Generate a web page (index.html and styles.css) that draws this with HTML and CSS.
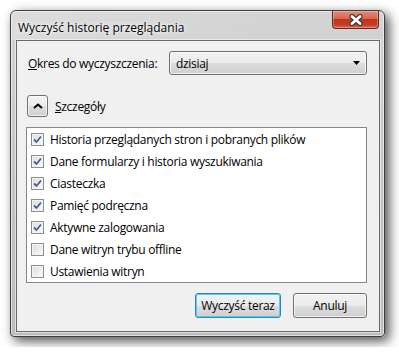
FILE: index.html
```
<!DOCTYPE html>
<html lang="pl">
<head>
    <meta charset="UTF-8">
    <title>Wyczyść historię przeglądania</title>
    <link rel="stylesheet" href="styles.css">
</head>
<body>
    <div class="window">
        <div class="titlebar">
            <span class="title">Wyczyść historię przeglądania</span>
            <div class="close-btn">
                <svg width="18" height="12" viewBox="0 0 18 12">
                    <path d="M5 2.5 L13 9.5 M13 2.5 L5 9.5" stroke="#3a3a3a" stroke-width="5" stroke-linecap="round"/>
                    <path d="M5 2.5 L13 9.5 M13 2.5 L5 9.5" stroke="#ffffff" stroke-width="2.8" stroke-linecap="round"/>
                </svg>
            </div>
        </div>

        <div class="client">
            <div class="period-row">
                <span class="label"><u>O</u>kres do wyczyszczenia:</span>
                <div class="select">
                    <span>dzisiaj</span>
                    <svg width="8" height="5" viewBox="0 0 8 5"><path d="M0 0 H7 L3.5 4 Z" fill="#000"/></svg>
                </div>
            </div>

            <div class="details-row">
                <div class="expander">
                    <svg width="10" height="6" viewBox="0 0 10 6"><path d="M1 5 L5 1.5 L9 5" fill="none" stroke="#000" stroke-width="2"/></svg>
                </div>
                <span><u>S</u>zczegóły</span>
            </div>

            <ul class="items">
                <li><span class="check on"></span>Historia przeglądanych stron i pobranych plików</li>
                <li><span class="check on"></span>Dane formularzy i historia wyszukiwania</li>
                <li><span class="check on"></span>Ciasteczka</li>
                <li><span class="check on"></span>Pamięć podręczna</li>
                <li><span class="check on"></span>Aktywne zalogowania</li>
                <li><span class="check"></span>Dane witryn trybu offline</li>
                <li><span class="check"></span>Ustawienia witryn</li>
            </ul>

            <div class="buttons">
                <button class="btn default">Wyczyść teraz</button>
                <button class="btn">Anuluj</button>
            </div>
        </div>
    </div>
</body>
</html>
```

FILE: styles.css
```
body {
    margin: 0;
    padding: 10px;
    background: #ffffff;
    font-family: 'Open Sans', sans-serif;
    font-size: 12px;
    color: #000;
}
.window {
    width: 375px;
    height: 327px;
    box-sizing: border-box;
    border: 1px solid #3e3e3e;
    border-radius: 6px 6px 4px 4px;
    background: linear-gradient(to bottom, #d4d4d4, #c2c2c2 60%, #bdbdbd);
    box-shadow: 4px 4px 12px rgba(0, 0, 0, 0.7), inset 0 0 0 1px rgba(255, 255, 255, 0.55);
    display: flex;
    flex-direction: column;
}
.titlebar {
    height: 29px;
    display: flex;
    justify-content: space-between;
    align-items: flex-start;
    padding: 0 5px 0 7px;
    background: linear-gradient(to right, rgba(255,255,255,0.2), rgba(255,255,255,0) 70%);
    border-radius: 6px 6px 0 0;
}
.title {
    margin-top: 8px;
    text-shadow: 0 0 6px #fff, 0 0 3px #fff;
}
.close-btn {
    width: 45px;
    height: 17px;
    border: 1px solid #5a2a20;
    border-top: none;
    border-radius: 0 0 4px 4px;
    background: linear-gradient(to bottom, #e48c7a 0%, #d66650 45%, #bf3219 50%, #c43e24 80%, #d9664a 100%);
    box-shadow: inset 0 0 0 1px rgba(255, 255, 255, 0.3);
    display: flex;
    justify-content: center;
    align-items: center;
}
.client {
    flex: 1;
    margin: 0 4px 4px 5px;
    border: 1px solid #6a6a6a;
    background: #f0f0f0;
    padding: 10px 12px 0 9px;
    display: flex;
    flex-direction: column;
    box-shadow: 0 0 0 1px rgba(255, 255, 255, 0.5);
}
.period-row {
    display: flex;
    align-items: center;
    justify-content: space-between;
}
.label {
    margin-left: 2px;
    letter-spacing: -0.3px;
}
.select {
    width: 198px;
    height: 24px;
    box-sizing: border-box;
    border: 1px solid #707070;
    border-radius: 3px;
    background: linear-gradient(to bottom, #f2f2f2 0%, #ebebeb 50%, #dddddd 51%, #cfcfcf 100%);
    box-shadow: inset 0 0 0 1px rgba(255, 255, 255, 0.7);
    display: flex;
    align-items: center;
    justify-content: space-between;
    padding: 0 5px 0 6px;
    letter-spacing: -0.3px;
}
.details-row {
    display: flex;
    align-items: center;
    gap: 7px;
    margin-top: 20px;
    letter-spacing: -0.3px;
}
.expander {
    width: 21px;
    height: 22px;
    box-sizing: border-box;
    border: 1px solid #707070;
    border-radius: 3px;
    background: linear-gradient(to bottom, #f2f2f2 0%, #ebebeb 50%, #dddddd 51%, #cfcfcf 100%);
    box-shadow: inset 0 0 0 1px rgba(255, 255, 255, 0.7);
    display: flex;
    align-items: center;
    justify-content: center;
    margin-left: 1px;
}
.items {
    list-style: none;
    margin: 10px 0 0 0;
    padding: 0;
    height: 156px;
    box-sizing: border-box;
    border: 1px solid #828790;
    background: #fff;
}
.items li {
    height: 22px;
    display: flex;
    align-items: center;
    gap: 6px;
    padding-left: 4px;
    letter-spacing: -0.3px;
}
.check {
    width: 13px;
    height: 13px;
    box-sizing: border-box;
    border: 1px solid #8e8f8f;
    background: linear-gradient(135deg, #dcdcdc, #fbfbfb);
    box-shadow: inset 0 0 0 1px #f4f4f4;
    flex-shrink: 0;
}
.check.on {
    background: url("data:image/svg+xml,%3Csvg xmlns='http://www.w3.org/2000/svg' width='11' height='11'%3E%3Cpath d='M2 5.5 L4.5 8 L9 2.5' fill='none' stroke='%234a5f97' stroke-width='1.8'/%3E%3C/svg%3E") center no-repeat, linear-gradient(135deg, #dcdcdc, #fbfbfb);
}
.buttons {
    display: flex;
    justify-content: flex-end;
    gap: 12px;
    margin-top: 10px;
}
.btn {
    height: 25px;
    width: 74px;
    box-sizing: border-box;
    border: 1px solid #707070;
    border-radius: 3px;
    background: linear-gradient(to bottom, #f2f2f2 0%, #ebebeb 50%, #dddddd 51%, #cfcfcf 100%);
    box-shadow: inset 0 0 0 1px rgba(255, 255, 255, 0.7);
    font-family: 'Open Sans', sans-serif;
    font-size: 12px;
    letter-spacing: -0.3px;
    color: #000;
    padding: 0;
}
.btn.default {
    width: 86px;
    border-color: #3c7fb1;
    box-shadow: inset 0 0 0 1px #48d1ff;
}
```
